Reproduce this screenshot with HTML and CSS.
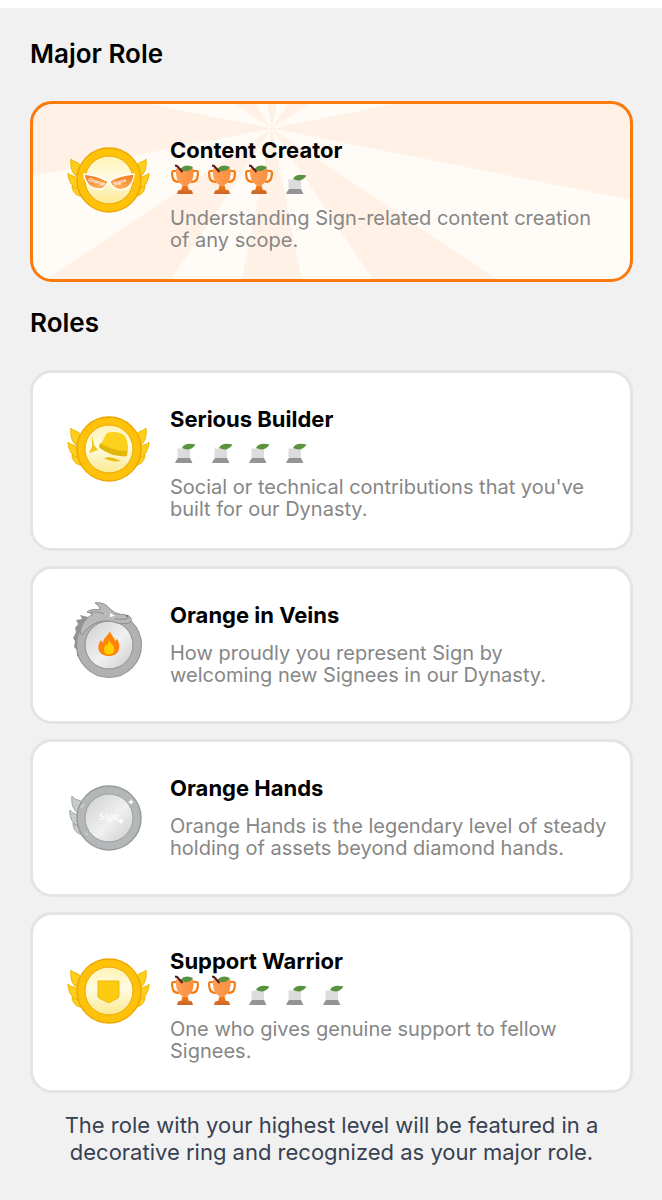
FILE: index.html
```
<!DOCTYPE html>
<html lang="en">
<head>
  <meta charset="UTF-8" />
  <meta name="viewport" content="width=device-width, initial-scale=1" />
  <title>Roles</title>
  <link rel="stylesheet" href="styles.css">
</head>
<body>
  <!-- shared icons -->
  <svg class="sprite" aria-hidden="true">
    <defs>
      <linearGradient id="cream" x1="0" y1="0" x2="0" y2="1">
        <stop offset="0" stop-color="#fff3b4" />
        <stop offset="0.45" stop-color="#fffbe2" />
        <stop offset="1" stop-color="#fbe990" />
      </linearGradient>
      <linearGradient id="silver" x1="0" y1="0" x2="1" y2="1">
        <stop offset="0" stop-color="#cfcece" />
        <stop offset="0.55" stop-color="#f1f0f0" />
        <stop offset="1" stop-color="#cccbcb" />
      </linearGradient>
      <linearGradient id="cup" x1="0" y1="0" x2="1" y2="0">
        <stop offset="0" stop-color="#ff9f57" />
        <stop offset="1" stop-color="#fb8f3e" />
      </linearGradient>
      <linearGradient id="stem" x1="0" y1="0" x2="0" y2="1">
        <stop offset="0" stop-color="#f57c14" />
        <stop offset="1" stop-color="#c8642c" />
      </linearGradient>
      <linearGradient id="lens" x1="0" y1="0" x2="0" y2="1">
        <stop offset="0" stop-color="#f47a1c" />
        <stop offset="1" stop-color="#fbb45c" />
      </linearGradient>
    </defs>

    <symbol id="wing" viewBox="0 0 100 92">
      <path d="M11 23c3 4 9 2 9 8l-4 9c-4-3-6-10-5-17z" fill="#fdcf1d" stroke="#f0b400" />
      <path d="M8 37c3 4 9 2 11 8l-2 8c-5-2-9-9-9-16z" fill="#fdcf1d" stroke="#f0b400" />
      <path d="M12 50c3 3 7 1 10 6l-1 4c-5 0-9-5-9-10z" fill="#fdcf1d" stroke="#f0b400" />
    </symbol>

    <symbol id="medal" viewBox="0 0 100 92">
      <use href="#wing" width="100" height="92" />
      <g transform="translate(97 0) scale(-1 1)">
        <use href="#wing" width="100" height="92" />
      </g>
      <circle cx="49" cy="44" r="32" fill="#ffc20a" stroke="#eda600" stroke-width="1.4" />
      <circle cx="49" cy="44" r="24" fill="url(#cream)" stroke="#eda600" />
    </symbol>

    <symbol id="trophy" viewBox="0 0 30 30">
      <path d="M7 7H3.500c-2 0-1.500 3-1 6s2 5 6.500 5M21 7h5.500c2 0 1.500 3 1 6s-2 5-6.500 5" fill="none" stroke="#f57c14" stroke-width="2.200" />
      <path d="M6 4.500h17.500c.5 7-.5 14-6 16.500l1 4h-7l1-4C7 18.500 5.500 12 6 4.500z" fill="url(#cup)" />
      <path d="M12.500 22h5l1 3.500 3.500 1 1 3.500H7l1-3.500 3.500-1z" fill="url(#stem)" />
      <path d="M10.500 5c3-4 8-4.500 12.500-2-2 4-8 6-12.500 2z" fill="#5a9340" />
      <path d="M5 1.500l2 .5 5.500 6" fill="none" stroke="#5b1a1c" stroke-width="2" />
    </symbol>

    <symbol id="sprout" viewBox="0 0 30 30">
      <path d="M7.500 15.500h12.500v10h-12.500z" fill="#dcdcdc" />
      <path d="M8 25h12l1 2 1.500 3h-17.500l1.500-3z" fill="#949496" />
      <path d="M12 15c2-5 8-5 13.500-3.500C22 17 17 17.500 12 15z" fill="#5a9340" />
    </symbol>
  </svg>

  <main class="page">
    <h2 class="heading">Major Role</h2>

    <article class="card major">
      <svg class="badge" viewBox="0 0 100 92" aria-hidden="true">
        <use href="#medal" width="100" height="92" />
        <path d="M24 38c8 1 16 3 21 6 2 1 5 1 7 0 5-4 13-5 22-6 0 6-3 11-7 14-4 2-9 2-12 0-3-1-4-4-5-6h-2c-1 3-3 6-7 7-6 0-11-1-14-6-2-3-3-6-3-9z" fill="url(#lens)" stroke="#fff" stroke-width="1.400" />
        <text class="lens-text" x="28" y="45" transform="rotate(16 28 45)">Orange</text>
        <text class="lens-text" x="54" y="50" transform="rotate(-20 54 50)">Signs</text>
      </svg>
      <div class="info">
        <h3 class="title">Content Creator</h3>
        <div class="levels">
          <svg class="level"><use href="#trophy" /></svg>
          <svg class="level"><use href="#trophy" /></svg>
          <svg class="level"><use href="#trophy" /></svg>
          <svg class="level"><use href="#sprout" /></svg>
        </div>
        <p class="desc">Understanding Sign-related content creation of any scope.</p>
      </div>
    </article>

    <h2 class="heading">Roles</h2>

    <div class="list">
      <article class="card">
        <svg class="badge" viewBox="0 0 100 92" aria-hidden="true">
          <use href="#medal" width="100" height="92" />
          <path d="M32 30l2 10 4 5-9 3 3-6z" fill="#efc619" />
          <path d="M47 28c6-2 14-1 18 3 3 6 4 13 2 20-9 1-20-2-28-9 3-3 5-10 8-14z" fill="#fbd11b" />
          <path d="M40 38c8 5 17 8 27 8v5c-9 1-20-2-28-9z" fill="#e3b60c" />
          <path d="M44 53c6-2 10 0 17 3-6 1-12 0-17-3z" fill="#e8bd12" />
        </svg>
        <div class="info">
          <h3 class="title">Serious Builder</h3>
          <div class="levels">
            <svg class="level"><use href="#sprout" /></svg>
            <svg class="level"><use href="#sprout" /></svg>
            <svg class="level"><use href="#sprout" /></svg>
            <svg class="level"><use href="#sprout" /></svg>
          </div>
          <p class="desc">Social or technical contributions that you've built for our Dynasty.</p>
        </div>
      </article>

      <article class="card">
        <svg class="badge" viewBox="0 0 100 92" aria-hidden="true">
          <path d="M28 16l-8-2 2 4-6 1 2 4-3 4 1 4-3 6 2 3-1 6 3 3 0 6 4 2 3 5 6-5V25z" fill="#929594" />
          <circle cx="49" cy="44" r="28" fill="none" stroke="#8f9191" stroke-width="10" />
          <circle cx="49" cy="44" r="28" fill="none" stroke="#b0b1b0" stroke-width="8" />
          <circle cx="49" cy="44" r="24" fill="url(#silver)" stroke="#909292" />
          <path d="M20 31c2-9 6-14 13-18l-6-2c4-3 8-3 13-2 0-3-2-5-5-7 7-1 12 2 14 5l6 5c5 2 10 1 14 3 3 2 3 6 0 7-5 1-10 1-15-1-7-2-14-1-20 2-5 3-9 6-12 11z" fill="#b9bab7" stroke="#8b8e8d" />
          <path d="M30 12c4-2 9-1 14 1M55 18c5 0 10 1 14-1" fill="none" stroke="#8b8f8e" />
          <path d="M50 12l5 3-5 1z" fill="#fff" />
          <circle cx="67" cy="15" r="1" fill="#626767" />
          <path d="M50 30c1 5 5 6 5 10l2-2c5 8 2 17-8 17-11 0-13-9-8-16l2 3c0-5 5-7 7-12z" fill="#ff8508" />
          <path d="M49 39c1 4 6 5 5 10 0 6-10 6-10 0 0-3 1-4 2-6l2 2c0-2 0-4 1-6z" fill="#ffd000" />
        </svg>
        <div class="info">
          <h3 class="title">Orange in Veins</h3>
          <p class="desc">How proudly you represent Sign by welcoming new Signees in our Dynasty.</p>
        </div>
      </article>

      <article class="card">
        <svg class="badge" viewBox="0 0 100 92" aria-hidden="true">
          <path d="M12 22c3 5 10 3 12 9l-5 9c-6-4-8-10-7-18zM10 36c3 5 8 3 11 8l-2 9c-6-3-10-9-9-17zM13 49c3 4 7 2 11 7l-1 5c-6-1-10-5-10-12z" fill="#c8cbcb" stroke="#a1a5a6" />
          <circle cx="49" cy="44" r="32" fill="#b3b7b8" stroke="#94999a" stroke-width="1.400" />
          <circle cx="49" cy="44" r="24" fill="url(#silver)" stroke="#9a9fa0" />
          <text class="coin-text" x="39" y="46">Sign</text>
          <path d="M71 25l1 2 2 1-2 1-1 2-1-2-2-1 2-1zM61 44l1 2 2 1-2 1-1 2-1-2-2-1 2-1z" fill="#fff" />
          <path d="M21 34l3-4M25 59l3 2" stroke="#e8eaea" />
        </svg>
        <div class="info">
          <h3 class="title">Orange Hands</h3>
          <p class="desc">Orange Hands is the legendary level of steady holding of assets beyond diamond hands.</p>
        </div>
      </article>

      <article class="card">
        <svg class="badge" viewBox="0 0 100 92" aria-hidden="true">
          <use href="#medal" width="100" height="92" />
          <path d="M38 34h21v15c0 3-6 4-10 7-5-3-11-4-11-7z" fill="#fdcb10" stroke="#f0b90a" />
        </svg>
        <div class="info">
          <h3 class="title">Support Warrior</h3>
          <div class="levels">
            <svg class="level"><use href="#trophy" /></svg>
            <svg class="level"><use href="#trophy" /></svg>
            <svg class="level"><use href="#sprout" /></svg>
            <svg class="level"><use href="#sprout" /></svg>
            <svg class="level"><use href="#sprout" /></svg>
          </div>
          <p class="desc">One who gives genuine support to fellow Signees.</p>
        </div>
      </article>
    </div>

    <p class="footnote">The role with your highest level will be featured in a decorative ring and recognized as your major role.</p>
  </main>
</body>
</html>
```
FILE: styles.css
```
* {
  box-sizing: border-box;
}

body {
  margin: 0;
  padding-top: 8px;
  background-color: #fff;
  font-family: Inter, "Liberation Sans", sans-serif;
  color: #000;
}

h2, h3, p {
  margin: 0;
}

.sprite {
  position: absolute;
  width: 0;
  height: 0;
}

.page {
  min-height: calc(100vh - 8px);
  padding: 30px 29px 30px 30px;
  background-color: #f1f1f1;
}

.heading {
  font-size: 26px;
  line-height: 32px;
  font-weight: 600;
  margin-bottom: 31px;
}

.card {
  display: flex;
  gap: 10px;
  padding: 32px 22px 28px 27px;
  background-color: #fff;
  border: 3px solid #e4e4e4;
  border-radius: 22px;
}

.card.major {
  margin-bottom: 25px;
  border-color: #fa7a0c;
  /* sun rays behind the content */
  background: repeating-conic-gradient(
    from -11.25deg at 40% 14%,
    #fff1e6 0deg 22.5deg,
    #fffcf8 22.5deg 45deg
  ) padding-box;
}

.list {
  display: flex;
  flex-direction: column;
  gap: 15px;
}

.badge {
  flex: none;
  width: 100px;
  height: 92px;
}

.info {
  flex: 1;
}

.title {
  font-size: 22px;
  line-height: 28px;
  font-weight: 700;
}

.levels {
  display: flex;
  gap: 7px;
}

.level {
  width: 30px;
  height: 30px;
}

.desc {
  margin-top: 13px;
  font-size: 20px;
  line-height: 22px;
  font-weight: 400;
  color: #868686;
}

.footnote {
  padding: 19px 24px 0;
  font-size: 22px;
  line-height: 27px;
  color: #374151;
  text-align: center;
}

.lens-text {
  font-size: 5px;
  font-weight: 600;
  font-style: italic;
  fill: #fff;
}

.coin-text {
  font-family: "Liberation Serif", serif;
  font-size: 11px;
  font-style: italic;
  fill: #fff;
}
```
